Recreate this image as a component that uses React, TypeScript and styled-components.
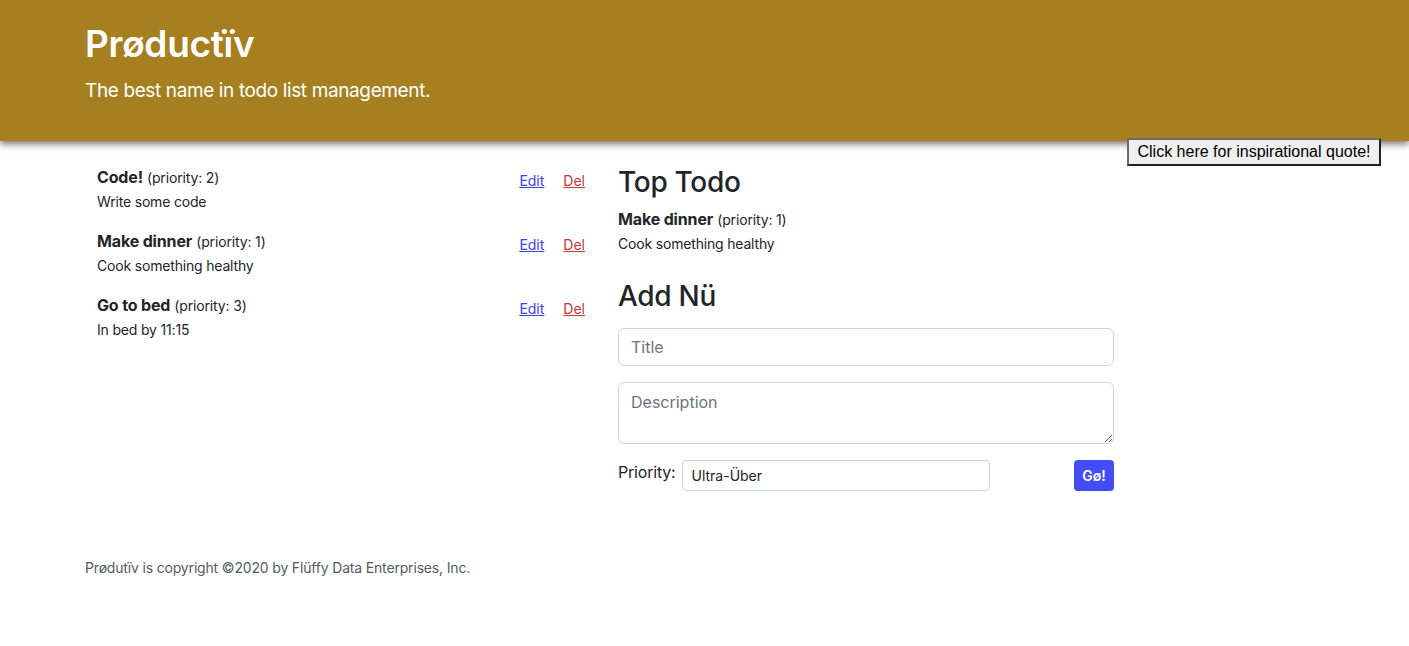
import React from "react";
import styled, { createGlobalStyle } from "styled-components";

const Global = createGlobalStyle`
  html, body { margin: 0; padding: 0; background: #fff; }
  body { font-family: Inter, "Noto Sans", sans-serif; color: #212529; }
  * { box-sizing: border-box; }
`;

const Page = styled.div`
  position: relative;
  width: 1409px;
  min-height: 646px;
`;

const Header = styled.header`
  background: #a67f20;
  height: 141px;
  padding: 22px 85px 0;
  color: #fff;
  box-shadow: 0 3px 7px rgba(0, 0, 0, 0.55);
  position: relative;
  z-index: 1;
`;

const Brand = styled.h1`
  margin: 0;
  font-size: 37px;
  font-weight: 600;
  line-height: 44px;
  letter-spacing: -0.3px;
`;

const Tagline = styled.p`
  margin: 13px 0 0;
  font-size: 19px;
  font-weight: 400;
  line-height: 24px;
  letter-spacing: -0.38px;
`;

const QuoteButton = styled.button`
  position: absolute;
  top: 138px;
  left: 1127px;
  width: 254px;
  height: 28px;
  z-index: 2;
  font-family: "Liberation Sans", Arial, sans-serif;
  font-size: 16px;
  color: #000;
  background: #efefef;
  border: 2px solid;
  border-color: #6b6b6b #222 #222 #6b6b6b;
  padding: 0;
`;

const Main = styled.main`
  display: grid;
  grid-template-columns: 512px 520px;
  column-gap: 9px;
  padding: 24px 0 0 85px;
`;

const ListColumn = styled.section`
  padding: 0 12px;
`;

const Item = styled.div`
  display: flex;
  justify-content: space-between;
  align-items: flex-start;
  margin-bottom: 15px;
`;

const ItemTitle = styled.div`
  font-size: 16px;
  line-height: 24px;
  height: 24px;
  letter-spacing: -0.15px;
`;

const Strong = styled.strong`
  font-weight: 700;
`;

const Priority = styled.span`
  font-size: 14px;
  line-height: 1;
  margin-left: 4px;
`;

const ItemDesc = styled.div`
  font-size: 14px;
  line-height: 24px;
  padding-top: 1px;
  letter-spacing: -0.18px;
`;

const Actions = styled.div`
  display: flex;
  gap: 19px;
  padding-top: 5px;
  font-size: 14px;
  line-height: 22px;
`;

const ActionLink = styled.a<{ $danger?: boolean }>`
  color: ${(p) => (p.$danger ? "#c0393b" : "#3b3df5")};
  text-decoration: underline;
  cursor: pointer;
`;

const SideColumn = styled.section`
  padding: 0 12px;
`;

const Heading = styled.h2<{ $top?: number }>`
  margin: ${(p) => p.$top ?? 0}px 0 8px;
  font-size: 28px;
  font-weight: 500;
  line-height: 34px;
  letter-spacing: -0.3px;
`;

const Form = styled.form`
  display: flex;
  flex-direction: column;
  gap: 16px;
  margin-top: 15px;
`;

const TextInput = styled.input`
  height: 38px;
  width: 100%;
  border: 1px solid #ced4da;
  border-radius: 6px;
  padding: 6px 12px;
  font-family: Inter, sans-serif;
  font-size: 16px;
  color: #212529;
  &::placeholder { color: #6c757d; }
`;

const TextArea = styled.textarea`
  height: 62px;
  width: 100%;
  border: 1px solid #ced4da;
  border-radius: 6px;
  padding: 8px 12px;
  font-family: Inter, sans-serif;
  font-size: 16px;
  line-height: 22px;
  resize: vertical;
  &::placeholder { color: #6c757d; }
`;

const PriorityRow = styled.div`
  display: flex;
  align-items: flex-start;
  height: 31px;
`;

const Label = styled.label`
  font-size: 16px;
  line-height: 24px;
  margin-right: 7px;
  letter-spacing: -0.2px;
`;

const Select = styled.div`
  width: 308px;
  height: 31px;
  border: 1px solid #ced4da;
  border-radius: 4px;
  padding: 0 8px;
  font-size: 14px;
  line-height: 29px;
`;

const GoButton = styled.button`
  margin-left: auto;
  width: 40px;
  height: 31px;
  background: #424cf8;
  color: #fff;
  border: none;
  border-radius: 4px;
  font-family: Inter, sans-serif;
  font-size: 14px;
  font-weight: 600;
  padding: 0;
`;

const Footer = styled.footer`
  padding: 67px 85px 0;
  font-size: 14px;
  line-height: 20px;
  color: #555b62;
  letter-spacing: -0.17px;
`;

const todos = [
  { title: "Code!", priority: 2, desc: "Write some code" },
  { title: "Make dinner", priority: 1, desc: "Cook something healthy" },
  { title: "Go to bed", priority: 3, desc: "In bed by 11:15" },
];

export default function App() {
  return (
    <Page>
      <Global />
      <Header>
        <Brand>Prøductïv</Brand>
        <Tagline>The best name in todo list management.</Tagline>
      </Header>
      <QuoteButton>Click here for inspirational quote!</QuoteButton>
      <Main>
        <ListColumn>
          {todos.map((t) => (
            <Item key={t.title}>
              <div>
                <ItemTitle>
                  <Strong>{t.title}</Strong>
                  <Priority>(priority: {t.priority})</Priority>
                </ItemTitle>
                <ItemDesc>{t.desc}</ItemDesc>
              </div>
              <Actions>
                <ActionLink>Edit</ActionLink>
                <ActionLink $danger>Del</ActionLink>
              </Actions>
            </Item>
          ))}
        </ListColumn>
        <SideColumn>
          <Heading>Top Todo</Heading>
          <ItemTitle>
            <Strong>Make dinner</Strong>
            <Priority>(priority: 1)</Priority>
          </ItemTitle>
          <ItemDesc>Cook something healthy</ItemDesc>
          <Heading $top={23}>Add Nü</Heading>
          <Form onSubmit={(e) => e.preventDefault()}>
            <TextInput placeholder="Title" />
            <TextArea placeholder="Description" />
            <PriorityRow>
              <Label>Priority:</Label>
              <Select>Ultra-Über</Select>
              <GoButton type="submit">Gø!</GoButton>
            </PriorityRow>
          </Form>
        </SideColumn>
      </Main>
      <Footer>Prødutïv is copyright ©2020 by Flüffy Data Enterprises, Inc.</Footer>
    </Page>
  );
}
